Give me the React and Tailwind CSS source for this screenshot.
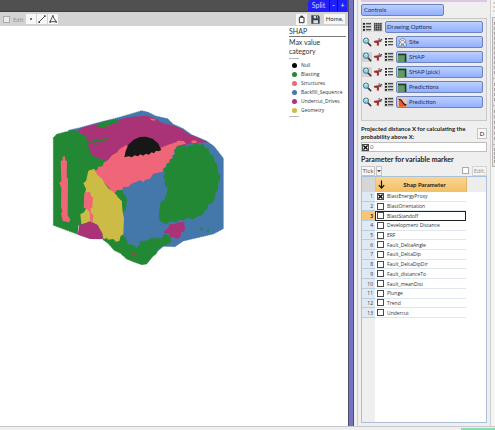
import React from 'react';
import { X } from 'lucide-react';

const LEGEND = [
    { name: 'Null', dot: 'bg-[#050505]' },
    { name: 'Blasting', dot: 'bg-[#228833]' },
    { name: 'Structures', dot: 'bg-[#ee6677]' },
    { name: 'Backfill_Sequence', dot: 'bg-[#4477aa]' },
    { name: 'Undercut_Drives', dot: 'bg-[#aa3377]' },
    { name: 'Geometry', dot: 'bg-[#ccbb44]' },
];

const LAYERS = [
    { name: 'Site', icon: 'site' },
    { name: 'SHAP', icon: 'block', zoomOn: true, listOn: true },
    { name: 'SHAP (pick)', icon: 'block', zoomOn: true },
    { name: 'Predictions', icon: 'block', listOn: true },
    { name: 'Prediction', icon: 'curve', listOn: true },
];

const PARAMETERS = [
    'BlastEnergyProxy',
    'BlastOrientation',
    'BlastStandoff',
    'Development Distance',
    'ERF',
    'Fault_DeltaAngle',
    'Fault_DeltaDip',
    'Fault_DeltaDipDir',
    'Fault_distanceTo',
    'Fault_meanDist',
    'Plunge',
    'Trend',
    'Undercut',
];

const blueButton =
    'flex items-center rounded-[2px] border border-[#6d83bd] bg-gradient-to-b from-[#bccfff] to-[#93b0ff] text-[#26304f]';

function CheckBox({ label, checked, className = '' }) {
    return (
        <span className={`relative block size-[7px] shrink-0 ${className}`}>
            <input
                type="checkbox"
                aria-label={label}
                defaultChecked={checked}
                className="peer block size-full appearance-none border border-[#4a4a4a] bg-white"
            />
            <X
                className="pointer-events-none absolute inset-0 hidden size-full text-black peer-checked:block"
                strokeWidth={4}
            />
        </span>
    );
}

function SearchIcon() {
    return (
        <svg viewBox="0 0 30 30" className="size-[10px]">
            <path d="M18 18 L26 26" stroke="#3c3540" strokeWidth="5" strokeLinecap="round" />
            <circle cx="12" cy="11" r="8" fill="#8ed3e6" stroke="#47788c" strokeWidth="3" />
            <path d="M8 9 Q11 5 15 7" stroke="#e8fbff" strokeWidth="3" fill="none" />
        </svg>
    );
}

function PinIcon() {
    return (
        <svg viewBox="0 0 30 30" className="size-[10px]">
            <path d="M14 15 L27 7" stroke="#4b4145" strokeWidth="4" />
            <path d="M19 3 L17 12 L25 14" stroke="#6f5a5c" strokeWidth="3" fill="none" />
            <path d="M2 12 L13 10 L19 15 L17 27 L11 25 L12 18 L4 17 Z" fill="#b5373c" />
            <path d="M5 14 L13 13 L14 22" stroke="#6b2d31" strokeWidth="2" fill="none" />
        </svg>
    );
}

function ListIcon() {
    return (
        <svg viewBox="0 0 30 30" className="size-[10px]" fill="#222">
            <path d="M3 3h6v5H3z M3 12h6v5H3z M3 21h6v5H3z" />
            <path d="M12 4h15v3H12z M12 13h15v3H12z M12 22h15v3H12z" />
        </svg>
    );
}

function GridIcon() {
    return (
        <svg viewBox="0 0 30 30" className="size-[10px]" fill="#444">
            <path d="M3 3h5v5H3z M9 3h5v5H9z M15 3h5v5h-5z M21 3h5v5h-5z" />
            <path d="M3 9h5v5H3z M9 9h5v5H9z M15 9h5v5h-5z M21 9h5v5h-5z" />
            <path d="M3 15h5v5H3z M9 15h5v5H9z M15 15h5v5h-5z M21 15h5v5h-5z" />
            <path d="M3 21h5v5H3z M9 21h5v5H9z M15 21h5v5h-5z M21 21h5v5h-5z" />
        </svg>
    );
}

function LayerIcon({ type }) {
    if (type === 'site') {
        return (
            <svg viewBox="0 0 30 30" className="size-[9px] shrink-0" fill="#fff" stroke="#555" strokeWidth="2">
                <path d="M4 8 L11 3 L20 3 L26 8 L25 16 L28 26 L20 28 L19 21 L11 21 L9 28 L2 26 L6 16 Z" />
                <path d="M10 9 L20 9 L22 16 L15 19 L8 16 Z" />
            </svg>
        );
    }
    if (type === 'curve') {
        return (
            <svg viewBox="0 0 30 30" className="size-[9px] shrink-0">
                <rect width="30" height="30" fill="#e9c9bb" />
                <path d="M3 6 Q11 6 15 14 Q19 22 28 23 V29 H3 Z" fill="#f0551d" />
                <path d="M2 5 Q11 4 15 13 Q19 22 28 23" stroke="#222" strokeWidth="4" fill="none" />
            </svg>
        );
    }
    return (
        <svg viewBox="0 0 30 30" className="size-[9px] shrink-0">
            <rect y="2" width="28" height="28" fill="#619b63" />
            <path d="M0 5 H25 V30" stroke="#263326" strokeWidth="5" fill="none" />
        </svg>
    );
}

// Voxel block model, one polygon per dominant category
function BlockModel() {
    return (
        <svg viewBox="0 0 600 540" className="h-[180px] w-[200px]" role="img" aria-label="SHAP block model">
            <path
                fill="#4477aa"
                stroke="#4477aa"
                strokeWidth="2"
                strokeDasharray="4 2"
                d="M85 106 L120 98 L170 84 L230 69 L275 56 L305 47 L325 52 L347 63 L383 71 L400 88 L430 101 L455 119 L500 138 L522 154 L535 170 L550 190 V401 L520 417 L430 438 L405 455 L370 454 L340 480 L240 460 L190 435 L150 300 Z"
            />
            <path
                fill="#aa3377"
                d="M112 107 L125 98 L170 86 L232 76 L262 67 L322 62 L350 73 L368 85 L395 90 L421 100 L447 118 L472 127 L503 142 L470 144 L430 150 L370 165 L290 190 L198 198 L150 180 L135 125 Z"
            />
            <path
                fill="#228833"
                stroke="#228833"
                strokeWidth="2"
                strokeDasharray="4 2"
                d="M40 128 L50 118 L75 111 L105 106 L116 109 L121 118 L138 122 L139 134 L144 137 L143 153 L148 160 L151 175 L160 184 L180 192 L199 198 L190 207 L185 223 L215 270 L240 286 L248 287 L250 305 L260 310 L257 340 L248 352 L246 420 L258 430 L263 447 L284 452 L288 461 L300 448 L301 440 L322 437 L335 429 L365 431 L374 418 L391 423 L392 442 L371 452 L353 462 L350 475 L337 486 L320 507 L305 509 L282 501 L260 492 L241 475 L222 466 L206 447 L190 434 L170 405 L115 390 L113 418 L40 391 Z"
            />
            <path fill="#228833" d="M165 92 L192 79 L234 73 L236 83 L214 86 L209 92 L184 98 Z M139 143 L158 136 L180 134 L202 128 L199 136 L178 139 L164 142 Z M150 151 L174 148 L173 153 Z" />
            <path
                fill="#ee6677"
                d="M160 226 L172 225 L174 216 L188 213 L191 203 L204 195 L217 180 L230 173 L238 163 L258 150 L267 160 L360 160 L385 149 L410 141 L413 137 L431 138 L438 146 L410 153 L407 163 L402 165 L404 178 L397 182 L397 190 L388 194 L389 203 L379 207 L378 216 L370 222 L368 230 L340 236 L330 251 L316 254 L309 262 L300 255 L290 260 L275 266 L265 275 L250 276 L246 286 L231 285 L224 295 L211 288 L208 279 L194 264 L181 255 Z"
            />
            <path fill="#ee6677" d="M455 137 L468 136 L471 143 L454 145 Z M330 70 L346 73 L345 77 L334 76 Z" />
            <path
                fill="#ccbb44"
                d="M145 227 L163 221 L165 229 L172 239 L187 253 L195 266 L206 281 L220 291 L236 307 L246 318 L248 350 L252 370 L250 418 L242 423 L238 438 L228 440 L220 432 L203 434 L202 429 L191 432 L184 414 L177 408 L172 390 L150 380 L124 388 L121 358 L132 352 L139 340 L132 320 L135 297 L138 282 L130 265 L138 258 L141 245 Z"
            />
            <path fill="#228833" d="M230 291 L245 285 L249 298 L258 302 L258 344 L249 348 L246 318 L232 305 Z" />
            <path
                fill="#ee6677"
                d="M68 185 L74 183 L77 197 L81 198 L80 247 L84 251 L83 361 L92 374 L86 382 L68 378 L63 355 L67 350 L63 335 L64 280 L58 263 L64 258 L62 198 L68 196 Z M133 293 L150 290 L153 304 L159 307 L157 336 L151 342 L154 356 L160 360 L158 381 L151 379 L149 350 L140 342 L131 338 Z"
            />
            <path fill="#aa3377" d="M118 389 L136 386 L148 379 L160 383 L173 390 L181 404 L188 417 L187 433 L150 432 L113 419 Z" />
            <path
                fill="#228833"
                d="M430 149 L439 152 L439 160 L446 152 L458 151 L465 143 L478 149 L490 148 L496 158 L506 161 L507 174 L520 184 L524 201 L532 208 L533 231 L541 241 L540 254 L535 265 L534 284 L526 294 L525 310 L516 325 L506 328 L501 343 L491 350 L488 360 L468 366 L461 373 L442 369 L431 376 L419 374 L408 382 L390 379 L379 388 L366 382 L356 373 L358 346 L363 319 L373 316 L382 288 L382 279 L374 268 L375 253 L369 246 L375 236 L370 220 L379 216 L380 206 L390 202 L388 194 L399 190 L398 182 L405 177 L403 166 L411 155 Z"
            />
            <path fill="#aa3377" d="M372 408 L383 401 L389 388 L407 386 L415 382 L433 381 L433 394 L437 397 L432 408 L424 412 L422 424 L411 432 L401 426 L391 426 L387 415 L373 415 Z" />
            <path fill="#228833" d="M481 400 L488 397 L489 405 L482 405 Z M500 404 L506 401 L508 408 L502 411 Z" />
            <path fill="#9b4650" d="M274 475 L284 474 L292 482 L285 485 L281 480 L275 481 Z" />
            <path
                fill="#171717"
                d="M253 187 L257 168 L266 148 L281 134 L300 126 L318 125 L338 131 L354 145 L364 165 L355 169 L348 167 L342 175 L335 172 L326 179 L318 176 L309 182 L302 178 L293 184 L284 181 L276 187 L266 184 Z"
            />
        </svg>
    );
}

function Viewer() {
    return (
        <main className="flex min-w-0 flex-1 flex-col bg-white">
            <div className="flex h-[12px] shrink-0 justify-end border-b border-[#3c3c3c] bg-[#505050] pr-[1px]">
                <div className="flex divide-x divide-[#101080] rounded-tl-[3px] bg-[#2020fa] text-[7px] leading-[11px] text-[#d5d5ff]">
                    <button type="button" className="w-[22px]">Split</button>
                    <button type="button" aria-label="Remove view" className="w-[8px] font-bold">-</button>
                    <button type="button" aria-label="Add view" className="w-[9px] font-bold">+</button>
                </div>
            </div>
            <div className="flex h-[14px] shrink-0 items-center bg-[#d3d3d3] px-[3px] text-[6px]">
                <label className="flex items-center gap-[3px] text-[#959595]">
                    <input type="checkbox" className="size-[7px] appearance-none border border-[#aaa] bg-[#ececec]" />
                    Edit
                </label>
                <div className="ml-[3px] flex gap-[1px]">
                    <button type="button" aria-label="Point" className="size-[10px] bg-[#f7f7f7]">
                        <svg viewBox="0 0 30 30"><circle cx="15" cy="15" r="3" fill="#444" /></svg>
                    </button>
                    <button type="button" aria-label="Line" className="size-[10px] bg-[#f7f7f7]">
                        <svg viewBox="0 0 30 30"><path d="M6 24 L24 6" stroke="#444" strokeWidth="3" /><path d="M4 22h5v5H4z M21 4h5v5h-5z" fill="#444" /></svg>
                    </button>
                    <button type="button" aria-label="Polygon" className="size-[10px] bg-[#f7f7f7]">
                        <svg viewBox="0 0 30 30"><path d="M6 23 L14 6 L24 23 Z" stroke="#555" strokeWidth="3" fill="none" /><path d="M4 21h5v5H4z M22 21h5v5h-5z M12 4h5v5h-5z" fill="#555" /></svg>
                    </button>
                </div>
                <div className="ml-auto flex items-center gap-[3px]">
                    <button type="button" aria-label="Clipboard" className="size-[11px] bg-[#f7f7f7]">
                        <svg viewBox="0 0 33 33" fill="none" stroke="#333" strokeWidth="3"><path d="M10 10h14v16H10z" /><path d="M13 7h8" strokeWidth="4" /></svg>
                    </button>
                    <button type="button" aria-label="Save" className="size-[11px]">
                        <svg viewBox="0 0 33 33"><path d="M4 4h21l4 4v21H4z" fill="#36404a" /><path d="M11 5h12v8H11z M10 19h14v9H10z" fill="#d9dee2" /><path d="M18 6h3v6h-3z" fill="#36404a" /></svg>
                    </button>
                    <button type="button" className="h-[10px] w-[21px] bg-[#f7f7f7] leading-[10px] text-[#333]">Home,</button>
                </div>
            </div>
            <div className="flex min-h-0 flex-1 items-start justify-between overflow-hidden">
                <div className="pt-[69px] pl-[40px]">
                    <BlockModel />
                </div>
                <section className="w-[59px] shrink-0 pt-[1px] pr-[2px] text-[#333]">
                    <h2 className="border-b border-[#777] text-[7px] leading-[9px]">SHAP</h2>
                    <p className="pt-[1px] text-[7px] leading-[9px]">Max value category</p>
                    <ul className="mt-[2px] flex flex-col font-['Open_Sans','Noto_Sans',sans-serif] text-[5px] leading-[9px]">
                        <li aria-hidden="true" className="mb-[2px] h-[1px] w-[10px] bg-[#bbb]" />
                        {LEGEND.map((item) => (
                            <li key={item.name} className="flex h-[9px] items-center gap-[4px] pl-[3px]">
                                <span className={`size-[5px] shrink-0 rounded-full ${item.dot}`} />
                                {item.name}
                            </li>
                        ))}
                        <li aria-hidden="true" className="mt-[1px] h-[1px] w-[10px] bg-[#bbb]" />
                    </ul>
                </section>
            </div>
        </main>
    );
}

function DrawingOptions() {
    return (
        <section className="flex h-[103px] flex-col gap-[3px] border border-[#c9c9c9] bg-[#ebebeb] pt-[2px] pr-[3px]">
            <div className="flex h-[12px] items-center gap-[1px]">
                <button type="button" aria-label="List view" className="bg-[#d9d9d9]"><ListIcon /></button>
                <button type="button" aria-label="Grid view" className="bg-[#d9d9d9]"><GridIcon /></button>
                <button type="button" className={`${blueButton} ml-[1px] h-[12px] flex-1 px-[1px]`}>Drawing Options</button>
            </div>
            {LAYERS.map((layer) => (
                <div key={layer.name} className="flex h-[12px] items-center gap-[1px]">
                    <button type="button" aria-label={`Zoom to ${layer.name}`} className={layer.zoomOn ? 'bg-[#d3d3d3]' : ''}><SearchIcon /></button>
                    <button type="button" aria-label={`Pin ${layer.name}`}><PinIcon /></button>
                    <button type="button" aria-label={`List ${layer.name}`} className={layer.listOn ? 'bg-[#d3d3d3]' : ''}><ListIcon /></button>
                    <button type="button" className={`${blueButton} ml-[1px] h-[12px] flex-1 gap-[2px] px-[1px]`}>
                        <LayerIcon type={layer.icon} />
                        {layer.name}
                    </button>
                </div>
            ))}
        </section>
    );
}

function ParameterTable() {
    return (
        <div className="flex min-h-0 flex-1 flex-col border border-[#a9c0d8] bg-white">
            <table className="h-[141px] w-full border-collapse leading-[8px] text-[#333]">
                <thead>
                    <tr className="h-[15px]">
                        <th aria-label="Row" className="w-[13px] border-r border-[#b3c9df] bg-[#d6d6d6]" />
                        <th className="border-r border-[#e0b565] bg-gradient-to-b from-[#fad591] to-[#f3bf64] p-0">
                            <div className="flex items-center text-[6px] font-bold text-[#222]">
                                <svg viewBox="0 0 30 30" className="ml-[1px] size-[9px]" fill="none" stroke="#111" strokeWidth="4"><path d="M15 2V26 M6 17L15 27L24 17" /></svg>
                                <span className="flex-1 pr-[2px] text-center">Shap Parameter</span>
                            </div>
                        </th>
                        <th aria-label="Spare" className="w-[20px] bg-[#ededed]" />
                    </tr>
                </thead>
                <tbody className="font-['Open_Sans','Noto_Sans',sans-serif] text-[5px] leading-[8px]">
                    {PARAMETERS.map((name, i) => {
                        const active = i === 2;
                        return (
                            <tr key={name}>
                                <th
                                    scope="row"
                                    className={`border-b border-[#b9cce0] py-0 pr-[2px] pl-0 text-right ${
                                        active ? 'bg-[#fbc671] font-bold' : 'bg-[#e0eaf5] font-normal'
                                    }`}
                                >
                                    {i + 1}
                                </th>
                                <td className={`border-b border-[#dfe6ee] p-0 ${active ? 'outline outline-[#222] -outline-offset-1' : ''}`}>
                                    <div className="flex items-center gap-[3px] pl-[2px]">
                                        <CheckBox label={name} checked={i === 0} />
                                        {name}
                                    </div>
                                </td>
                                <td className="p-0" />
                            </tr>
                        );
                    })}
                </tbody>
            </table>
            <div className="w-[13px] flex-1 bg-[#efefef]" />
        </div>
    );
}

function ControlPanel() {
    return (
        <aside className="flex w-[134px] shrink-0 flex-col border-x border-[#cfcfcf] bg-[#efefef] pr-[3px] pb-[3px] pl-[3px] text-[6px] leading-[8px] text-[#222]">
            <div className="h-[2px] shrink-0 bg-[#dfc6e3]" />
            <button type="button" className={`${blueButton} mt-[2px] mb-[2px] h-[12px] w-[83px] shrink-0 px-[2px]`}>Controls</button>
            <DrawingOptions />
            <div className="mt-[4px] flex items-center justify-between">
                <label htmlFor="distance" className="w-[112px] font-bold">
                    Projected distance X for calculating the probability above X:
                </label>
                <button type="button" className="h-[11px] w-[10px] border border-[#c4c4c4] bg-[#f7f7f7] leading-[9px]">D</button>
            </div>
            <div className="mt-[1px] flex h-[10px] shrink-0 items-center border border-[#bdbdbd] bg-white">
                <CheckBox label="Use distance" checked />
                <input id="distance" type="text" defaultValue="0" className="h-[8px] min-w-0 flex-1 px-[1px] text-[6px] leading-[8px] text-[#666]" />
            </div>
            <h2 className="mt-[3px] text-[7px] leading-[9px] font-bold">Parameter for variable marker</h2>
            <div className="mt-[1px] flex h-[11px] shrink-0 items-center">
                <button type="button" className="h-[10px] w-[14px] border border-[#c4c4c4] bg-[#f7f7f7] leading-[8px] text-[#555]">Tick</button>
                <button type="button" aria-label="Tick options" className="ml-[1px] flex h-[10px] w-[6px] items-center justify-center border border-[#c4c4c4] bg-[#f7f7f7]">
                    <svg viewBox="0 0 12 12" className="size-[4px]"><path d="M0 3H12L6 10Z" fill="#444" /></svg>
                </button>
                <div className="ml-auto flex items-center gap-[3px] text-[#999]">
                    <input type="checkbox" aria-label="Edit" className="size-[7px] appearance-none border border-[#aaa] bg-white" />
                    <button type="button" className="h-[10px] w-[15px] border border-[#d4d4d4] bg-[#f5f5f5] leading-[8px]">Edit,</button>
                </div>
            </div>
            <ParameterTable />
        </aside>
    );
}

// Edge of the docked tab column, mostly off the side of the window
function DockedTabs() {
    return (
        <div className="flex w-[4px] shrink-0 flex-col bg-[#f5f5f5] pl-[1px]">
            <svg viewBox="0 0 3 14" className="mb-[3px] h-[14px] w-[3px]"><path d="M2 2V13" stroke="#c9a99b" strokeWidth="1" strokeDasharray="2 2" /></svg>
            <div className="flex h-[150px] flex-col divide-y divide-[#b5b5b5] border-y border-l border-[#b5b5b5] bg-[#e6e6e6]">
                <div className="h-[61px] py-[4px] pl-[1px]"><div className="h-full border-l border-dashed border-[#a89c9c]" /></div>
                <div className="h-[27px] py-[4px] pl-[1px]"><div className="h-full border-l border-dashed border-[#a89c9c]" /></div>
                <div className="h-[39px] py-[4px] pl-[1px]"><div className="h-full border-l border-dashed border-[#a89c9c]" /></div>
                <div className="flex-1 py-[3px] pl-[1px]"><div className="h-full border-l border-dashed border-[#a89c9c]" /></div>
            </div>
        </div>
    );
}

export default function App() {
    return (
        <div className="flex h-screen flex-col overflow-hidden bg-[#efefef] font-['Lato','Noto_Sans',sans-serif]">
            <div className="flex min-h-0 flex-1">
                <Viewer />
                <div className="w-[6px] shrink-0 border-x border-[#4c4c66] bg-[#7474c0]" />
                <div className="w-[3px] shrink-0 bg-[#f0f0f0]" />
                <ControlPanel />
                <DockedTabs />
            </div>
            <footer className="flex h-[4px] shrink-0 justify-end border-t border-[#c8c8c8] bg-[#efefef]">
                <div className="mt-[1px] w-[34px] bg-[#8ed8b4]" />
            </footer>
        </div>
    );
}
